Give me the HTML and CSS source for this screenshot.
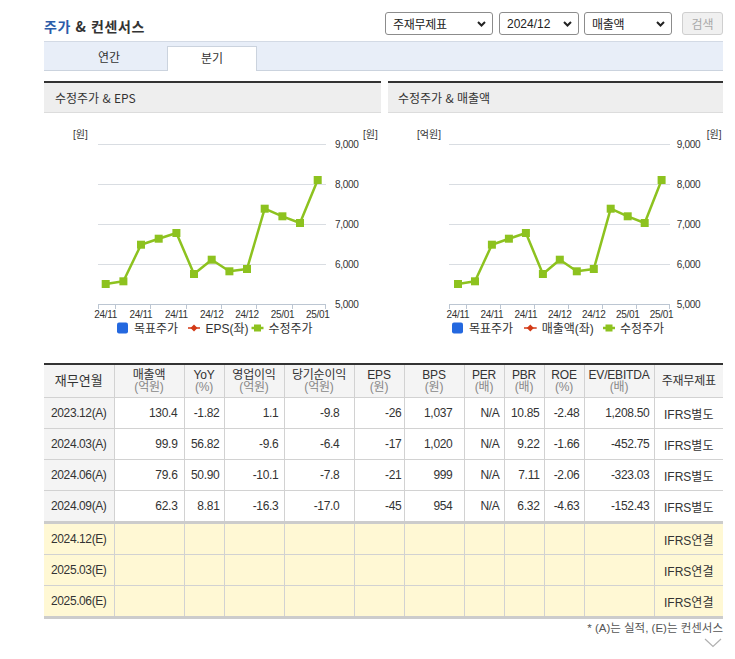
FILE: index.html
```html
<!DOCTYPE html>
<html lang="ko">
<head>
<meta charset="utf-8">
<title>주가 & 컨센서스</title>
<link rel="stylesheet" href="styles.css">
</head>
<body>
<div class="page">
  <div class="top">
    <h2 class="title"><span class="blue">주가</span> &amp; 컨센서스</h2>
    <div class="controls">
      <div class="sel s1"><span>주재무제표</span><svg width="9" height="6" viewBox="0 0 9 6"><path d="M1 1 L4.5 4.5 L8 1" /></svg></div>
      <div class="sel s2"><span class="num">2024/12</span><svg width="9" height="6" viewBox="0 0 9 6"><path d="M1 1 L4.5 4.5 L8 1" /></svg></div>
      <div class="sel s3"><span>매출액</span><svg width="9" height="6" viewBox="0 0 9 6"><path d="M1 1 L4.5 4.5 L8 1" /></svg></div>
      <button class="btn">검색</button>
    </div>
  </div>

  <div class="tabs">
    <div class="tab t1">연간</div>
    <div class="tab t2 active">분기</div>
  </div>

  <div class="charts">
    <div class="panel p1">
      <div class="ph">수정주가 &amp; EPS</div>
      <svg class="chart" width="337" height="227" viewBox="0 0 337 227">
        <g class="grid">
          <line x1="54" y1="31.5" x2="282" y2="31.5"/>
          <line x1="54" y1="71.5" x2="282" y2="71.5"/>
          <line x1="54" y1="111.5" x2="282" y2="111.5"/>
          <line x1="54" y1="151.5" x2="282" y2="151.5"/>
        </g>
        <g class="axis">
          <line x1="54" y1="191.5" x2="282" y2="191.5"/>
          <line x1="54.5" y1="191" x2="54.5" y2="196"/>
          <line x1="71.5" y1="191" x2="71.5" y2="196"/>
          <line x1="106.5" y1="191" x2="106.5" y2="196"/>
          <line x1="142.5" y1="191" x2="142.5" y2="196"/>
          <line x1="177.5" y1="191" x2="177.5" y2="196"/>
          <line x1="212.5" y1="191" x2="212.5" y2="196"/>
          <line x1="248.5" y1="191" x2="248.5" y2="196"/>
          <line x1="281.5" y1="191" x2="281.5" y2="196"/>
        </g>
        <text class="unit" x="29" y="24.5">[원]</text>
        <text class="unit" x="319" y="24.5">[원]</text>
        <g class="ylab">
          <text x="291" y="35">9,000</text>
          <text x="291" y="75">8,000</text>
          <text x="291" y="115">7,000</text>
          <text x="291" y="155">6,000</text>
          <text x="291" y="195">5,000</text>
        </g>
        <g class="xlab">
          <text x="61.7" y="205">24/11</text>
          <text x="97" y="205">24/11</text>
          <text x="132.4" y="205">24/11</text>
          <text x="167.7" y="205">24/12</text>
          <text x="203" y="205">24/12</text>
          <text x="238.4" y="205">25/01</text>
          <text x="273.7" y="205">25/01</text>
        </g>
        <polyline class="line" points="61.7,171 79.4,168.3 97,131.7 114.7,125.7 132.4,120 150,161 167.7,146.7 185.4,158.3 203,156 220.7,95.7 238.4,103.3 256,110 273.7,67"/>
        <g class="mk">
          <rect x="57.7" y="167" width="8" height="8"/>
          <rect x="75.4" y="164.3" width="8" height="8"/>
          <rect x="93" y="127.7" width="8" height="8"/>
          <rect x="110.7" y="121.7" width="8" height="8"/>
          <rect x="128.4" y="116" width="8" height="8"/>
          <rect x="146" y="157" width="8" height="8"/>
          <rect x="163.7" y="142.7" width="8" height="8"/>
          <rect x="181.4" y="154.3" width="8" height="8"/>
          <rect x="199" y="152" width="8" height="8"/>
          <rect x="216.7" y="91.7" width="8" height="8"/>
          <rect x="234.4" y="99.3" width="8" height="8"/>
          <rect x="252" y="106" width="8" height="8"/>
          <rect x="269.7" y="63" width="8" height="8"/>
        </g>
        <g class="legend">
          <rect class="lg-blue" x="73" y="209.5" width="11" height="11" rx="2"/>
          <text x="90" y="220">목표주가</text>
          <line class="lg-red" x1="144" y1="215" x2="156" y2="215"/>
          <polygon class="lg-redd" points="150,211.5 153.5,215 150,218.5 146.5,215"/>
          <text x="161.5" y="220">EPS(좌)</text>
          <line class="lg-green" x1="207.5" y1="215" x2="219.5" y2="215"/>
          <rect class="lg-greens" x="210" y="211.5" width="7" height="7"/>
          <text x="224.5" y="220">수정주가</text>
        </g>
      </svg>
    </div>
    <div class="panel p2">
      <div class="ph">수정주가 &amp; 매출액</div>
      <svg class="chart" width="335" height="227" viewBox="0 0 335 227">
        <g class="grid">
          <line x1="61" y1="31.5" x2="282" y2="31.5"/>
          <line x1="61" y1="71.5" x2="282" y2="71.5"/>
          <line x1="61" y1="111.5" x2="282" y2="111.5"/>
          <line x1="61" y1="151.5" x2="282" y2="151.5"/>
        </g>
        <g class="axis">
          <line x1="61" y1="191.5" x2="282" y2="191.5"/>
          <line x1="61.5" y1="191" x2="61.5" y2="196"/>
          <line x1="78.5" y1="191" x2="78.5" y2="196"/>
          <line x1="112.5" y1="191" x2="112.5" y2="196"/>
          <line x1="146.5" y1="191" x2="146.5" y2="196"/>
          <line x1="180.5" y1="191" x2="180.5" y2="196"/>
          <line x1="214.5" y1="191" x2="214.5" y2="196"/>
          <line x1="248.5" y1="191" x2="248.5" y2="196"/>
          <line x1="281.5" y1="191" x2="281.5" y2="196"/>
        </g>
        <text class="unit" x="29" y="24.5">[억원]</text>
        <text class="unit" x="318.7" y="24.5">[원]</text>
        <g class="ylab">
          <text x="288.7" y="35">9,000</text>
          <text x="288.7" y="75">8,000</text>
          <text x="288.7" y="115">7,000</text>
          <text x="288.7" y="155">6,000</text>
          <text x="288.7" y="195">5,000</text>
        </g>
        <g class="xlab">
          <text x="70" y="205">24/11</text>
          <text x="103.9" y="205">24/11</text>
          <text x="137.9" y="205">24/11</text>
          <text x="171.8" y="205">24/12</text>
          <text x="205.8" y="205">24/12</text>
          <text x="239.7" y="205">25/01</text>
          <text x="273.6" y="205">25/01</text>
        </g>
        <polyline class="line" points="70,171 87,168.3 103.9,131.7 120.9,125.7 137.9,120 154.9,161 171.8,146.7 188.8,158.3 205.8,156 222.7,95.7 239.7,103.3 256.7,110 273.6,67"/>
        <g class="mk">
          <rect x="66" y="167" width="8" height="8"/>
          <rect x="83" y="164.3" width="8" height="8"/>
          <rect x="99.9" y="127.7" width="8" height="8"/>
          <rect x="116.9" y="121.7" width="8" height="8"/>
          <rect x="133.9" y="116" width="8" height="8"/>
          <rect x="150.9" y="157" width="8" height="8"/>
          <rect x="167.8" y="142.7" width="8" height="8"/>
          <rect x="184.8" y="154.3" width="8" height="8"/>
          <rect x="201.8" y="152" width="8" height="8"/>
          <rect x="218.7" y="91.7" width="8" height="8"/>
          <rect x="235.7" y="99.3" width="8" height="8"/>
          <rect x="252.7" y="106" width="8" height="8"/>
          <rect x="269.6" y="63" width="8" height="8"/>
        </g>
        <g class="legend">
          <rect class="lg-blue" x="64" y="209.5" width="11" height="11" rx="2"/>
          <text x="81" y="220">목표주가</text>
          <line class="lg-red" x1="136" y1="215" x2="148.7" y2="215"/>
          <polygon class="lg-redd" points="142.3,211.5 145.8,215 142.3,218.5 138.8,215"/>
          <text x="153.7" y="220">매출액(좌)</text>
          <line class="lg-green" x1="215" y1="215" x2="227" y2="215"/>
          <rect class="lg-greens" x="217.5" y="211.5" width="7" height="7"/>
          <text x="232" y="220">수정주가</text>
        </g>
      </svg>
    </div>
  </div>

  <table class="fin">
    <colgroup>
      <col style="width:70px"><col style="width:70px"><col style="width:40px"><col style="width:60px">
      <col style="width:70px"><col style="width:50px"><col style="width:60px"><col style="width:40px">
      <col style="width:40px"><col style="width:40px"><col style="width:70px"><col style="width:69px">
    </colgroup>
    <thead>
      <tr>
        <th class="big">재무연월</th>
        <th>매출액<br><span class="u">(억원)</span></th>
        <th>YoY<br><span class="u">(%)</span></th>
        <th>영업이익<br><span class="u">(억원)</span></th>
        <th>당기순이익<br><span class="u">(억원)</span></th>
        <th>EPS<br><span class="u">(원)</span></th>
        <th>BPS<br><span class="u">(원)</span></th>
        <th>PER<br><span class="u">(배)</span></th>
        <th>PBR<br><span class="u">(배)</span></th>
        <th>ROE<br><span class="u">(%)</span></th>
        <th>EV/EBITDA<br><span class="u">(배)</span></th>
        <th>주재무제표</th>
      </tr>
    </thead>
    <tbody>
      <tr><td>2023.12(A)</td><td>130.4</td><td>-1.82</td><td>1.1</td><td>-9.8</td><td>-26</td><td>1,037</td><td>N/A</td><td>10.85</td><td>-2.48</td><td>1,208.50</td><td>IFRS별도</td></tr>
      <tr><td>2024.03(A)</td><td>99.9</td><td>56.82</td><td>-9.6</td><td>-6.4</td><td>-17</td><td>1,020</td><td>N/A</td><td>9.22</td><td>-1.66</td><td>-452.75</td><td>IFRS별도</td></tr>
      <tr><td>2024.06(A)</td><td>79.6</td><td>50.90</td><td>-10.1</td><td>-7.8</td><td>-21</td><td>999</td><td>N/A</td><td>7.11</td><td>-2.06</td><td>-323.03</td><td>IFRS별도</td></tr>
      <tr><td>2024.09(A)</td><td>62.3</td><td>8.81</td><td>-16.3</td><td>-17.0</td><td>-45</td><td>954</td><td>N/A</td><td>6.32</td><td>-4.63</td><td>-152.43</td><td>IFRS별도</td></tr>
      <tr class="est first"><td>2024.12(E)</td><td></td><td></td><td></td><td></td><td></td><td></td><td></td><td></td><td></td><td></td><td>IFRS연결</td></tr>
      <tr class="est"><td>2025.03(E)</td><td></td><td></td><td></td><td></td><td></td><td></td><td></td><td></td><td></td><td></td><td>IFRS연결</td></tr>
      <tr class="est"><td>2025.06(E)</td><td></td><td></td><td></td><td></td><td></td><td></td><td></td><td></td><td></td><td></td><td>IFRS연결</td></tr>
    </tbody>
  </table>

  <div class="note">* (A)는 실적, (E)는 컨센서스</div>
  <div class="more"><svg width="18" height="10" viewBox="0 0 18 10"><path d="M1 1 L9 8.5 L17 1"/></svg></div>
</div>
</body>
</html>
```

FILE: styles.css
```css
html, body {
  margin: 0;
  padding: 0;
  background: #fff;
}
body {
  font-family: "Liberation Sans", "Noto Sans CJK KR", sans-serif;
  color: #333;
}
.page {
  width: 679px;
  padding: 12px 0 0 44px;
}

/* top row */
.top {
  display: flex;
  justify-content: space-between;
  align-items: flex-start;
  height: 23px;
}
.title {
  margin: 6px 0 0 0;
  font-size: 14px;
  line-height: 16px;
  font-weight: bold;
  letter-spacing: 0.6px;
  color: #333;
  font-family: "Noto Sans CJK KR", sans-serif;
}
.title .blue { color: #2b5ca9; }
.controls {
  display: flex;
}
.sel {
  box-sizing: border-box;
  height: 23px;
  border: 1px solid #8c8c8c;
  border-radius: 3px;
  display: flex;
  align-items: center;
  justify-content: space-between;
  padding: 0 6px 0 7px;
  font-size: 12px;
  font-family: "Noto Sans CJK KR", sans-serif;
  letter-spacing: -0.3px;
  color: #222;
  background: #fff;
}
.sel .num {
  font-family: "Liberation Sans", sans-serif;
  letter-spacing: 0;
}
.sel svg path {
  fill: none;
  stroke: #222;
  stroke-width: 2;
}
.s1 { width: 108px; }
.s2 { width: 80px; margin-left: 6px; }
.s3 { width: 88px; margin-left: 5px; }
.btn {
  box-sizing: border-box;
  width: 41px;
  height: 23px;
  margin-left: 10px;
  border: 1px solid #cfcfcf;
  border-radius: 3px;
  background: #f0f0f0;
  color: #a8a8a8;
  font-size: 12px;
  font-family: "Noto Sans CJK KR", sans-serif;
  padding: 0;
}

/* tabs */
.tabs {
  margin-top: 6px;
  height: 30px;
  box-sizing: border-box;
  background: #e8eef8;
  border-top: 1px solid #d3dae5;
  border-bottom: 1px solid #cbd3de;
  display: flex;
  align-items: flex-end;
}
.tab {
  width: 90px;
  height: 24px;
  line-height: 22px;
  text-align: center;
  font-size: 12px;
  font-family: "Noto Sans CJK KR", sans-serif;
  color: #333;
  box-sizing: border-box;
}
.t1 { margin-left: 20px; }
.t2 { margin-left: 13px; }
.tab.active {
  background: #fff;
  height: 25px;
  margin-bottom: -1px;
  border: 1px solid #cbd3de;
  border-bottom: 0;
}

/* charts */
.charts {
  display: flex;
  gap: 7px;
  margin-top: 10px;
}
.p1 { width: 337px; }
.p2 { width: 335px; }
.ph {
  border-top: 2px solid #333;
  background: #eeeeee;
  height: 29px;
  line-height: 29px;
  border-bottom: 1px solid #dcdcdc;
  padding-left: 11px;
  font-size: 12px;
  font-family: "Noto Sans CJK KR", sans-serif;
  color: #333;
}
.p2 .ph { padding-left: 10px; }
.chart {
  display: block;
  font-family: "Liberation Sans", "Noto Sans CJK KR", sans-serif;
}
.chart .grid line {
  stroke: #d9dde2;
  stroke-width: 1;
}
.chart .axis line {
  stroke: #bcc6d2;
  stroke-width: 1;
}
.chart .unit {
  font-size: 10px;
  fill: #333;
}
.chart .ylab text,
.chart .xlab text {
  font-family: "Liberation Sans", sans-serif;
  font-size: 10px;
  letter-spacing: -0.3px;
  fill: #333;
}
.chart .xlab text { text-anchor: middle; }
.chart .line {
  fill: none;
  stroke: #8dc21f;
  stroke-width: 2.5;
  stroke-linejoin: round;
}
.chart .mk rect { fill: #8dc21f; }
.chart .legend text {
  font-size: 12px;
  fill: #333;
}
.lg-blue { fill: #2468df; }
.lg-red { stroke: #d33a16; stroke-width: 1.5; }
.lg-redd { fill: #d33a16; }
.lg-green { stroke: #8dc21f; stroke-width: 2.5; }
.lg-greens { fill: #8dc21f; }

/* table */
.fin {
  margin-top: 23px;
  width: 679px;
  table-layout: fixed;
  border-collapse: collapse;
  border-top: 2px solid #333;
  border-bottom: 3px solid #cccccc;
}
.fin th, .fin td {
  border: 1px solid #d2d2d2;
  padding: 0;
  height: 30px;
  font-weight: normal;
  color: #333;
}
.fin th { height: 32px; }
.fin th:first-child, .fin td:first-child { border-left: 0; }
.fin th:last-child, .fin td:last-child { border-right: 0; }
.fin th {
  background: #f4f4f4;
  font-size: 12px;
  line-height: 12.5px;
  text-align: center;
  font-family: "Liberation Sans", "Noto Sans CJK KR", sans-serif;
  letter-spacing: -0.2px;
}
.fin th.big { font-size: 13px; letter-spacing: 0; }
.fin th .u { color: #888; }
.fin td {
  font-family: "Liberation Sans", sans-serif;
  font-size: 12px;
  letter-spacing: -0.3px;
  text-align: right;
  background: #fff;
}
.fin td:first-child {
  text-align: center;
  background: #f4f4f4;
  letter-spacing: -0.4px;
}
.fin td:last-child {
  text-align: center;
  letter-spacing: 0;
  font-family: "Liberation Sans", "Noto Sans CJK KR", sans-serif;
}
.fin td:nth-child(2) { padding-right: 6px; }
.fin td:nth-child(3) { padding-right: 4px; }
.fin td:nth-child(4) { padding-right: 5px; }
.fin td:nth-child(5) { padding-right: 14px; }
.fin td:nth-child(6) { padding-right: 2px; }
.fin td:nth-child(7) { padding-right: 11px; }
.fin td:nth-child(8),
.fin td:nth-child(9),
.fin td:nth-child(10),
.fin td:nth-child(11) { padding-right: 4px; }
.fin tr.est td,
.fin tr.est td:first-child { background: #fff8d4; }
.fin tr.est.first td { border-top: 3px solid #cccccc; }

.note {
  text-align: right;
  font-size: 11.5px;
  line-height: 14px;
  margin-top: 2px;
  color: #555;
  font-family: "Liberation Sans", "Noto Sans CJK KR", sans-serif;
}
.more {
  display: flex;
  justify-content: flex-end;
  margin-top: 3px;
  padding-right: 1px;
}
.more path {
  fill: none;
  stroke: #b0b0b0;
  stroke-width: 1.2;
}
```
